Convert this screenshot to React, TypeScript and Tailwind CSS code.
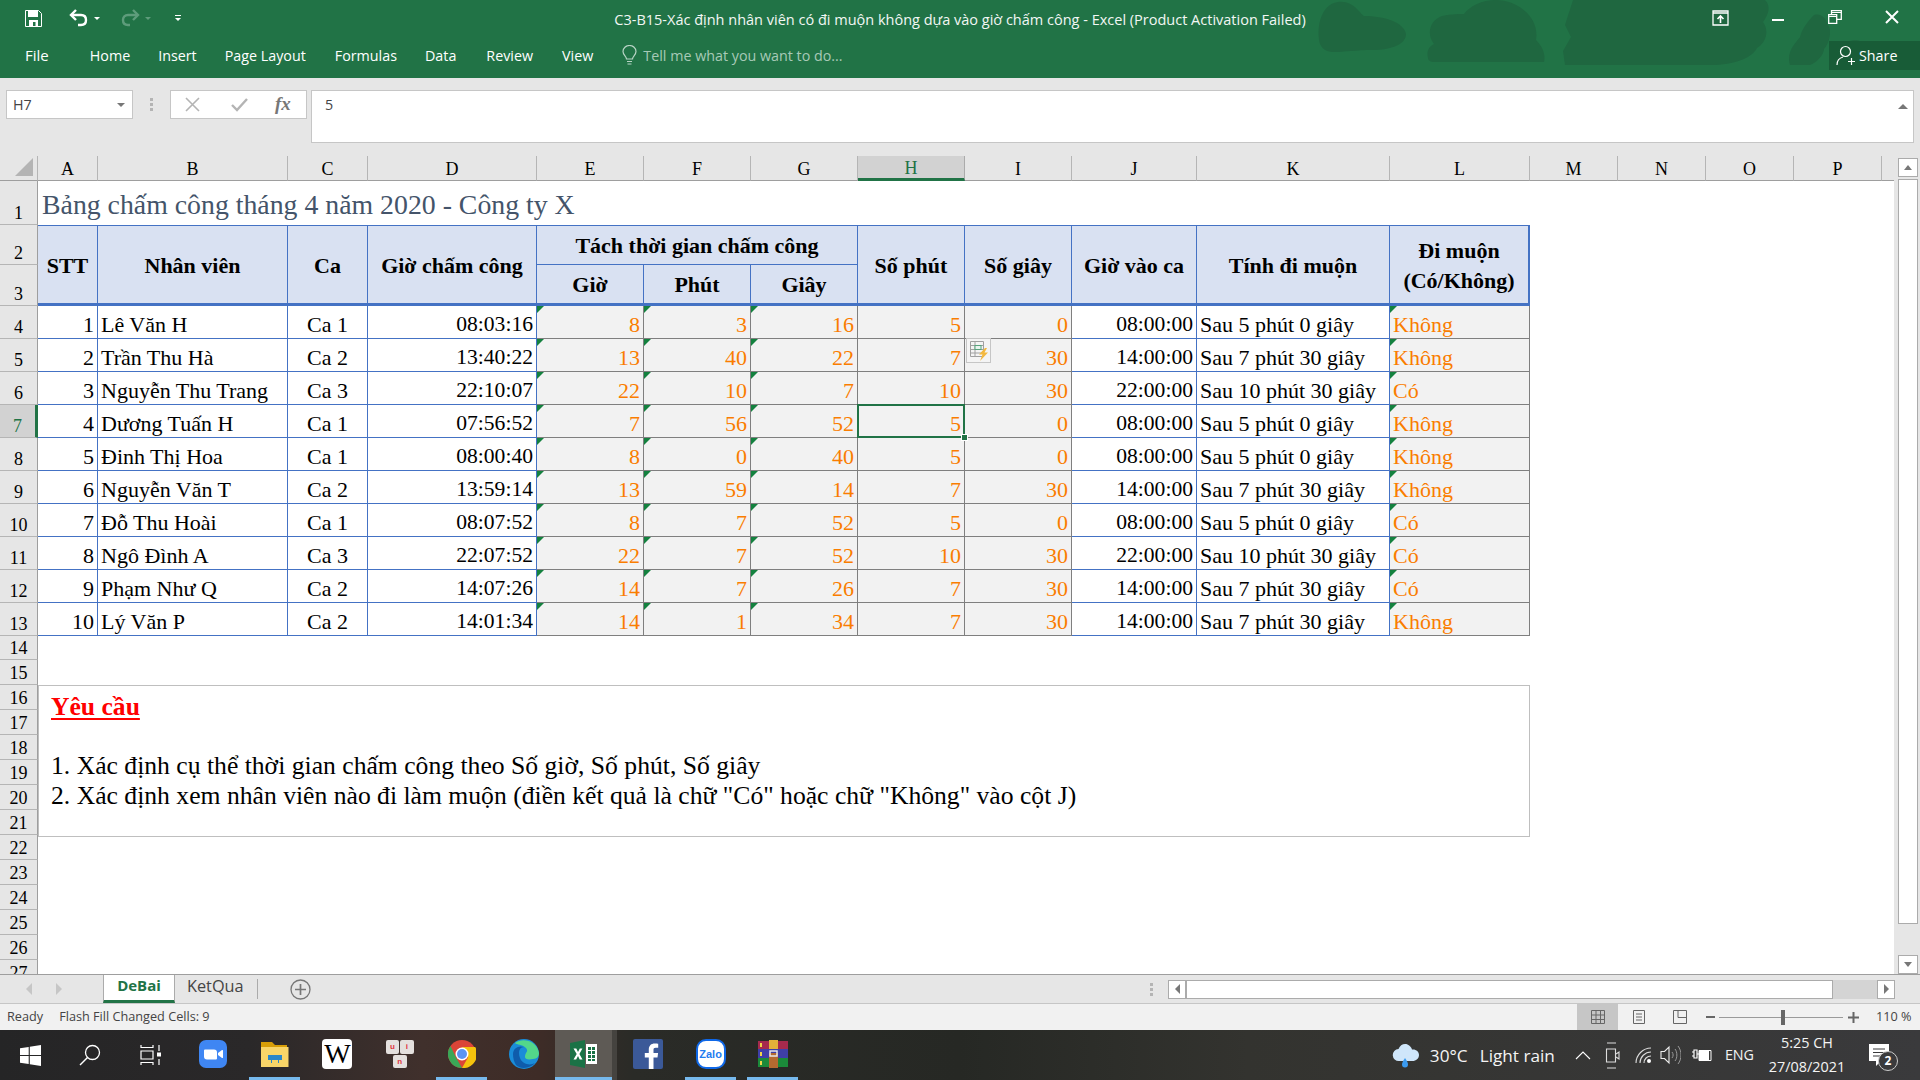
import { Fragment } from "react";

const UI = "font-['Open_Sans',sans-serif]";

const COLS = ["A", "B", "C", "D", "E", "F", "G", "H", "I", "J", "K", "L", "M", "N", "O", "P"];

const ROWS: [number, string, string, string, number, number, number, number, number, string, string, string][] = [
  [1, "Lê Văn H", "Ca 1", "08:03:16", 8, 3, 16, 5, 0, "08:00:00", "Sau 5 phút 0 giây", "Không"],
  [2, "Trần Thu Hà", "Ca 2", "13:40:22", 13, 40, 22, 7, 30, "14:00:00", "Sau 7 phút 30 giây", "Không"],
  [3, "Nguyễn Thu Trang", "Ca 3", "22:10:07", 22, 10, 7, 10, 30, "22:00:00", "Sau 10 phút 30 giây", "Có"],
  [4, "Dương Tuấn H", "Ca 1", "07:56:52", 7, 56, 52, 5, 0, "08:00:00", "Sau 5 phút 0 giây", "Không"],
  [5, "Đinh Thị Hoa", "Ca 1", "08:00:40", 8, 0, 40, 5, 0, "08:00:00", "Sau 5 phút 0 giây", "Không"],
  [6, "Nguyễn Văn T", "Ca 2", "13:59:14", 13, 59, 14, 7, 30, "14:00:00", "Sau 7 phút 30 giây", "Không"],
  [7, "Đỗ Thu Hoài", "Ca 1", "08:07:52", 8, 7, 52, 5, 0, "08:00:00", "Sau 5 phút 0 giây", "Có"],
  [8, "Ngô Đình A", "Ca 3", "22:07:52", 22, 7, 52, 10, 30, "22:00:00", "Sau 10 phút 30 giây", "Có"],
  [9, "Phạm Như Q", "Ca 2", "14:07:26", 14, 7, 26, 7, 30, "14:00:00", "Sau 7 phút 30 giây", "Có"],
  [10, "Lý Văn P", "Ca 2", "14:01:34", 14, 1, 34, 7, 30, "14:00:00", "Sau 7 phút 30 giây", "Không"],
];

function RowHead({ n, active, clipped }: { n: number; active?: boolean; clipped?: boolean }) {
  return (
    <div
      className={`col-start-1 flex justify-center overflow-hidden text-[18px] ${
        clipped ? "items-start leading-[26px]" : "items-end border-b border-b-[#b5b5b5] leading-[22px]"
      } ${
        active
          ? "bg-[#d2d2d2] text-[#217346] border-r-[3px] border-r-[#217346]"
          : "bg-[#e6e6e6] text-black border-r border-r-[#9e9e9e]"
      }`}
    >
      {n}
    </div>
  );
}

function Tri() {
  return <span className="absolute left-0 top-0 border-t-[7px] border-r-[7px] border-t-[#14813f] border-r-transparent" />;
}

function Head({ children, className = "" }: { children: React.ReactNode; className?: string }) {
  return (
    <div className={`flex items-center justify-center border-r border-b border-[#4472c4] bg-[#d9e1f2] pt-[2px] text-center font-bold leading-[30px] ${className}`}>
      {children}
    </div>
  );
}

const blue = "border-r border-b border-[#4472c4] bg-white text-black";
const gray = "border-r border-b border-r-[#7f7f7f] border-b-[#7f7f7f] bg-[#f2f2f2] text-[#fa7d00]";
const cell = "relative flex items-end whitespace-nowrap leading-[27px]";

function Sheet() {
  return (
    <div className="grid w-[1894px] grid-cols-[38px_60px_190px_80px_169px_107px_107px_107px_107px_107px_125px_193px_140px_88px_88px_88px_88px_12px] grid-rows-[25px_44px_40px_41px_repeat(10,33px)_24px_repeat(12,25px)_14px] overflow-hidden bg-white font-['Liberation_Serif',serif] text-[22px] text-black">
      {/* column letters */}
      <div className="relative border-r border-b border-r-[#b5b5b5] border-b-[#9e9e9e] bg-[#e6e6e6]">
        <svg className="absolute right-[4px] bottom-[4px]" width="18" height="18" viewBox="0 0 18 18">
          <path d="M18 0v18H0z" fill="#b4b4b4" />
        </svg>
      </div>
      {COLS.map((c) => (
        <div
          key={c}
          className={`flex items-center justify-center border-r pt-[3px] text-[18px] ${
            c === "H"
              ? "bg-[#d2d2d2] border-r-[#ababab] border-b-[3px] border-b-[#217346] text-[#217346]"
              : "bg-[#e6e6e6] border-r-[#b5b5b5] border-b border-b-[#9e9e9e]"
          }`}
        >
          {c}
        </div>
      ))}
      <div className="border-b border-b-[#9e9e9e] bg-[#e6e6e6]" />

      <RowHead n={1} />
      <div className="col-span-12 flex items-end pl-[4px] pb-[1px] text-[27.8px] leading-[38px] whitespace-nowrap text-[#44546a]">
        Bảng chấm công tháng 4 năm 2020 - Công ty X
      </div>

      <RowHead n={2} />
      <Head className="row-span-2 border-t border-b-[3px]">STT</Head>
      <Head className="row-span-2 border-t border-b-[3px]">Nhân viên</Head>
      <Head className="row-span-2 border-t border-b-[3px]">Ca</Head>
      <Head className="row-span-2 border-t border-b-[3px]">Giờ chấm công</Head>
      <Head className="col-span-3 border-t">Tách thời gian chấm công</Head>
      <Head className="row-span-2 border-t border-b-[3px]">Số phút</Head>
      <Head className="row-span-2 border-t border-b-[3px]">Số giây</Head>
      <Head className="row-span-2 border-t border-b-[3px]">Giờ vào ca</Head>
      <Head className="row-span-2 border-t border-b-[3px]">Tính đi muộn</Head>
      <Head className="row-span-2 border-t border-b-[3px] border-r-2">
        <span>
          Đi muộn
          <br />
          (Có/Không)
        </span>
      </Head>

      <RowHead n={3} />
      <Head className="border-b-[3px]">Giờ</Head>
      <Head className="border-b-[3px]">Phút</Head>
      <Head className="border-b-[3px]">Giây</Head>

      {ROWS.map((r, i) => {
        const rowNo = i + 4;
        return (
          <Fragment key={rowNo}>
            <RowHead n={rowNo} active={rowNo === 7} />
            <div className={`${cell} ${blue} justify-end pr-[3px]`}>{r[0]}</div>
            <div className={`${cell} ${blue} pl-[3px]`}>{r[1]}</div>
            <div className={`${cell} ${blue} justify-center`}>{r[2]}</div>
            <div className={`${cell} ${blue} justify-end pr-[3px] text-[21.6px]`}>{r[3]}</div>
            <div className={`${cell} ${gray} justify-end pr-[3px]`}><Tri />{r[4]}</div>
            <div className={`${cell} ${gray} justify-end pr-[3px]`}><Tri />{r[5]}</div>
            <div className={`${cell} ${gray} justify-end pr-[3px]`}><Tri />{r[6]}</div>
            <div className={`${cell} ${gray} justify-end pr-[3px]`}>
              {r[7]}
              {rowNo === 7 && (
                <>
                  <span className="absolute -top-px -left-px -right-px -bottom-px z-10 border-2 border-[#217346]" />
                  <span className="absolute -right-[4px] -bottom-[4px] z-10 size-[7px] border border-white bg-[#217346]" />
                </>
              )}
            </div>
            <div className={`${cell} ${gray} justify-end pr-[3px]`}>
              {r[8]}
              {rowNo === 5 && <FlashFillTag />}
            </div>
            <div className={`${cell} ${blue} justify-end pr-[3px] text-[21.6px]`}>{r[9]}</div>
            <div className={`${cell} ${blue} pl-[3px]`}>{r[10]}</div>
            <div className={`${cell} ${gray} pl-[3px]`}><Tri />{r[11]}</div>
          </Fragment>
        );
      })}

      <RowHead n={14} />
      <RowHead n={15} />
      <RowHead n={16} />
      <div className="col-span-12 row-span-6 h-[152px] border border-[#bfbfbf] bg-white pl-[12px] text-[25.65px] text-black">
        <div className="mt-[2px] text-[25.6px] leading-[38px] font-bold text-[#ff0000] underline underline-offset-[3px]">Yêu cầu</div>
        <div className="mt-[25px] leading-[30px] whitespace-nowrap">1. Xác định cụ thể thời gian chấm công theo Số giờ, Số phút, Số giây</div>
        <div className="leading-[30px] whitespace-nowrap">2. Xác định xem nhân viên nào đi làm muộn (điền kết quả là chữ "Có" hoặc chữ "Không" vào cột J)</div>
      </div>
      {[17, 18, 19, 20, 21, 22, 23, 24, 25, 26].map((n) => (
        <RowHead key={n} n={n} />
      ))}
      <RowHead n={27} clipped />
    </div>
  );
}

function FlashFillTag() {
  return (
    <span className="absolute top-[-1px] left-[1px] z-10 flex size-[25px] items-center justify-center border border-[#c6c6c6] bg-[#f4f4f4]">
      <svg width="20" height="21" viewBox="0 0 20 21">
        <path d="M1.5 1.5h13v15h-13zM1.5 5.500h13M1.5 9.500h13M1.500 13h13M6 1.500v15" fill="none" stroke="#a0a0a0" />
        <rect x="6" y="5.500" width="6" height="4" fill="#e8f4ee" stroke="#57a37c" />
        <path d="M16 8l-6 6.500h3.500L11 21l8-8.500h-3.500l2.500-4.500z" fill="#f3b83e" />
      </svg>
    </span>
  );
}

function Cloud() {
  return (
    <svg className="absolute top-0 left-[1300px]" width="620" height="65" viewBox="0 0 620 65">
      <g fill="#1f6740">
        <path d="M20 44C16 30 20 4 38 2c16-2 22 12 26 14 20 0 40 6 42 18 0 10-14 16-34 16-14 0-30 2-36 2-6 0-12 0-16-8z" />
        <path d="M128 58c-2-8 2-12 6-14-8-10-4-24 8-28 10-2 18-2 22-2 6-8 18-14 32-14 20 0 44 16 40 40 6 6 10 14 8 22H134c-4 0-6-2-6-4z" />
        <path d="M265 65l-2-14 8-14-6-12 8-25h192c6 6 4 14-2 22 6 8 4 20-6 26-4 8-18 16-42 17z" />
        <path d="M490 65c-4-14 6-22 10-28 2-8 8-16 14-22 8-2 12 4 14 10 4 4 2 18-4 24 0 6-8 14-14 16z" />
        <path d="M540 65c0-12 4-22 10-24 10-4 18 4 22 14l6 10z" />
      </g>
    </svg>
  );
}

const TABS: [string, string][] = [
  ["Home", "ml-[41px]"],
  ["Insert", "ml-[28px]"],
  ["Page Layout", "ml-[28px]"],
  ["Formulas", "ml-[29px]"],
  ["Data", "ml-[28px]"],
  ["Review", "ml-[30px]"],
  ["View", "ml-[29px]"],
];

function TitleBar() {
  return (
    <div className="relative h-[78px] shrink-0 bg-[#217346] text-white">
      <Cloud />
      <div className="relative flex h-[41px] items-start">
        <div className="flex flex-1 items-center pt-[9px]">
          <svg className="ml-[25px]" width="17" height="17" viewBox="0 0 17 17">
            <path d="M.5.5h13l3 3v13H.5z" fill="none" stroke="#fff" />
            <path d="M3 1h10v6H3zM4 10h9v6H4z" fill="#fff" />
            <path d="M8 12h2.500v4H8z" fill="#217346" />
          </svg>
          <svg className="ml-[27px]" width="20" height="18" viewBox="0 0 20 18">
            <path d="M7 1L2 6l5 5" fill="none" stroke="#fff" strokeWidth="2.400" />
            <path d="M3 6h9c3 0 5 2 5 5s-2 5-5 5H9" fill="none" stroke="#fff" strokeWidth="2.400" />
          </svg>
          <span className="ml-[5px] border-x-[3px] border-t-[3px] border-x-transparent border-t-white" />
          <svg className="ml-[20px]" width="20" height="18" viewBox="0 0 20 18">
            <path d="M13 1l5 5-5 5" fill="none" stroke="#5e9c7b" strokeWidth="2.400" />
            <path d="M17 6H8c-3 0-5 2-5 5s2 5 5 5h2" fill="none" stroke="#5e9c7b" strokeWidth="2.400" />
          </svg>
          <span className="ml-[5px] border-x-[3px] border-t-[3px] border-x-transparent border-t-[#5e9c7b]" />
          <span className="ml-[24px] flex flex-col items-center gap-[2px]">
            <span className="h-px w-[6px] bg-white" />
            <span className="border-x-[3px] border-t-[3px] border-x-transparent border-t-white" />
          </span>
        </div>
        <div className={`${UI} pt-[10px] text-[14.5px] leading-[20px] whitespace-nowrap text-[#f2f7f4]`}>
          C3-B15-Xác định nhân viên có đi muộn không dựa vào giờ chấm công - Excel (Product Activation Failed)
        </div>
        <div className="flex flex-1 justify-end pt-[10px]">
          <div className="flex w-[57px] justify-center">
            <svg width="17" height="17" viewBox="0 0 17 17">
              <path d="M1 1h15v14H1zM1 3h15" fill="none" stroke="#fff" strokeWidth="1.300" />
              <path d="M8.500 13V6M5.500 9l3-3 3 3" fill="none" stroke="#fff" strokeWidth="1.600" />
            </svg>
          </div>
          <div className="flex w-[57px] items-center justify-center"><span className="mt-[2px] h-[2px] w-[12px] bg-white" /></div>
          <div className="flex w-[57px] justify-center">
            <svg width="14" height="14" viewBox="0 0 14 14">
              <path d="M.7 4.700h8v8.600h-8zM3.500 4.500V.7h9.800v8.600H9" fill="none" stroke="#fff" strokeWidth="1.300" />
              <path d="M.7 6.500h8M3.500 2.500h10" stroke="#fff" strokeWidth="1" />
            </svg>
          </div>
          <div className="flex w-[57px] justify-center">
            <svg width="14" height="14" viewBox="0 0 14 14">
              <path d="M1 1l12 12M13 1L1 13" stroke="#fff" strokeWidth="2" />
            </svg>
          </div>
        </div>
      </div>
      <div className={`${UI} relative flex h-[29px] items-center pl-[25px] text-[14.3px]`}>
        <span className="text-[15px]">File</span>
        {TABS.map(([t, ml]) => (
          <span key={t} className={ml}>{t}</span>
        ))}
        <svg className="ml-[29px]" width="15" height="21" viewBox="0 0 15 21">
          <path d="M4.500 14c0-2.500-3.500-4-3.500-7.500a6.500 6 0 0 1 13 0C14 10 10.500 11.500 10.500 14zM5 16.500h5M5.500 19h4" fill="none" stroke="#b8d4c5" strokeWidth="1.200" />
        </svg>
        <span className="ml-[6px] text-[#a7cab7]">Tell me what you want to do...</span>
        <div className="ml-auto flex h-full w-[91px] items-center gap-[3px] bg-[#185c37] pl-[7px]">
          <svg width="20" height="21" viewBox="0 0 20 21">
            <circle cx="9.500" cy="6.500" r="5" fill="none" stroke="#fff" strokeWidth="1.200" />
            <path d="M1 20c0-4 2-7 6-8M12 16.500h7M15.500 13v7" fill="none" stroke="#fff" strokeWidth="1.200" />
          </svg>
          <span>Share</span>
        </div>
      </div>
    </div>
  );
}

function FormulaBar() {
  return (
    <div className={`${UI} flex h-[78px] shrink-0 items-start bg-[#e6e6e6] pt-[12px] pl-[6px] text-[14.3px] text-[#444]`}>
      <div className="flex h-[29px] w-[127px] items-center justify-between border border-[#c6c6c6] bg-white pr-[7px] pl-[6px]">
        <span>H7</span>
        <span className="border-x-[4px] border-t-[4px] border-x-transparent border-t-[#777]" />
      </div>
      <div className="flex h-[29px] w-[37px] flex-col items-center justify-center gap-[2px]">
        <span className="size-[3px] bg-[#b4b4b4]" />
        <span className="size-[3px] bg-[#b4b4b4]" />
        <span className="size-[3px] bg-[#b4b4b4]" />
      </div>
      <div className="flex h-[29px] w-[137px] items-center border border-[#c6c6c6] bg-white">
        <svg className="ml-[14px]" width="15" height="15" viewBox="0 0 15 15">
          <path d="M1 1l13 13M14 1L1 14" stroke="#b4b4b4" strokeWidth="1.600" />
        </svg>
        <svg className="ml-[31px]" width="17" height="15" viewBox="0 0 17 15">
          <path d="M1 8l5 5L16 2" fill="none" stroke="#b4b4b4" strokeWidth="2.400" />
        </svg>
        <span className="ml-[27px] font-['Liberation_Serif',serif] text-[19px] font-bold text-[#777] italic">fx</span>
      </div>
      <div className="relative ml-[4px] h-[53px] w-[1603px] border border-[#c6c6c6] bg-white pt-[4px] pl-[13px] leading-[20px]">
        5
        <span className="absolute top-[13px] right-[5px] border-x-[5px] border-b-[5px] border-x-transparent border-b-[#777]" />
      </div>
    </div>
  );
}

function VScroll() {
  return (
    <div className="flex h-[818px] w-[26px] flex-col items-center bg-[#e6e6e6] pt-[2px] pl-[2px]">
      <div className="flex h-[19px] w-[20px] shrink-0 items-center justify-center border border-[#ababab] bg-white">
        <span className="border-x-[4px] border-b-[5px] border-x-transparent border-b-[#777]" />
      </div>
      <div className="mt-[2px] h-[745px] w-[20px] border border-[#ababab] bg-white" />
      <div className="mt-auto flex h-[19px] w-[20px] items-center justify-center border border-[#ababab] bg-white">
        <span className="border-x-[4px] border-t-[5px] border-x-transparent border-t-[#777]" />
      </div>
    </div>
  );
}

function SheetTabs() {
  return (
    <div className={`${UI} flex h-[29px] shrink-0 items-stretch border-t border-[#9e9e9e] bg-[#e6e6e6]`}>
      <div className="flex w-[103px] items-center pl-[26px]">
        <span className="border-y-[6px] border-r-[6px] border-y-transparent border-r-[#c6c6c6]" />
        <span className="ml-[24px] border-y-[6px] border-l-[6px] border-y-transparent border-l-[#c6c6c6]" />
      </div>
      <div className="flex w-[72px] items-center justify-center border-x border-b-[3px] border-x-[#ababab] border-b-[#217346] bg-white pb-[5px] text-[15px] font-bold text-[#217346]">
        DeBai
      </div>
      <div className="flex w-[82px] items-center pb-[5px] pl-[12px] text-[16.3px] text-[#444]">
        KetQua
        <span className="mt-[5px] ml-[13px] h-[20px] w-px bg-[#ababab]" />
      </div>
      <div className="ml-[33px] flex items-center">
        <svg width="21" height="21" viewBox="0 0 21 21">
          <circle cx="10.500" cy="10.500" r="9.500" fill="none" stroke="#777" strokeWidth="1.300" />
          <path d="M10.500 5v11M5 10.500h11" stroke="#777" strokeWidth="1.700" />
        </svg>
      </div>
      <div className="ml-[839px] flex flex-col justify-center gap-[2px]">
        <span className="size-[3px] bg-[#b4b4b4]" />
        <span className="size-[3px] bg-[#b4b4b4]" />
        <span className="size-[3px] bg-[#b4b4b4]" />
      </div>
      <div className="ml-[15px] flex h-[19px] w-[727px] self-center bg-[#d4d4d4]">
        <div className="flex w-[18px] items-center justify-center border border-[#ababab] bg-white">
          <span className="border-y-[5px] border-r-[5px] border-y-transparent border-r-[#777]" />
        </div>
        <div className="w-[647px] border border-[#ababab] bg-white" />
        <div className="ml-auto flex w-[18px] items-center justify-center border border-[#ababab] bg-white">
          <span className="border-y-[5px] border-l-[5px] border-y-transparent border-l-[#777]" />
        </div>
      </div>
    </div>
  );
}

function StatusBar() {
  return (
    <div className={`${UI} flex h-[27px] shrink-0 items-center border-t border-[#c6c6c6] bg-[#f1f1f1] pl-[7px] text-[12.7px] text-[#444]`}>
      <span>Ready</span>
      <span className="ml-[16px]">Flash Fill Changed Cells: 9</span>
      <div className="ml-auto flex h-full items-center">
        <div className="flex h-full w-[41px] items-center justify-center bg-[#c6c6c6]">
          <svg width="14" height="14" viewBox="0 0 14 14">
            <path d="M.5.5h13v13H.5zM.5 5h13M.5 9.500h13M5 .5v13M9.500.5v13" fill="none" stroke="#666" />
          </svg>
        </div>
        <div className="flex w-[41px] justify-center">
          <svg width="14" height="14" viewBox="0 0 14 14">
            <path d="M1.500.5h11v13h-11zM4 4h6M4 7h6M4 10h6" fill="none" stroke="#666" />
          </svg>
        </div>
        <div className="flex w-[41px] justify-center">
          <svg width="14" height="14" viewBox="0 0 14 14">
            <path d="M.5.5h13v13H.5zM5 .5v7h8.500" fill="none" stroke="#666" />
          </svg>
        </div>
        <span className="ml-[6px] h-[2px] w-[9px] bg-[#666]" />
        <div className="relative ml-[4px] h-px w-[124px] bg-[#9a9a9a]">
          <span className="absolute top-[-7px] left-[62px] h-[15px] w-[4px] bg-[#666]" />
        </div>
        <svg className="ml-[5px]" width="11" height="11" viewBox="0 0 11 11">
          <path d="M5.500 0v11M0 5.500h11" stroke="#666" strokeWidth="2" />
        </svg>
        <span className="mr-[8px] ml-[17px] w-[36px] whitespace-nowrap">110 %</span>
      </div>
    </div>
  );
}

function TaskBtn({ children, open, active }: { children: React.ReactNode; open?: boolean; active?: boolean }) {
  return (
    <div
      className={`relative flex h-full w-[62.2px] shrink-0 items-center justify-center pb-[2px] ${
        active ? "border-r-[5px] border-r-[#45433f] bg-[#5e5a55]" : ""
      }`}
    >
      {children}
      {open && <span className={`absolute bottom-0 h-[3px] bg-[#76b9ed] ${active ? "inset-x-0" : "left-[5px] w-[51px]"}`} />}
    </div>
  );
}

function Taskbar() {
  return (
    <div className={`${UI} flex h-[50px] shrink-0 items-stretch bg-[linear-gradient(90deg,#252526_0%,#2a2829_13%,#40302c_22%,#3e2c27_28%,#2a2b27_33%,#262824_50%,#33332f_65%,#3a3a3c_100%)] text-white`}>
      <div className="flex w-[60px] items-center justify-center">
        <svg width="21" height="21" viewBox="0 0 21 21">
          <path d="M0 3.200l8.700-1.300v8.100H0zM9.800 1.700L21 0v10H9.800zM0 11h8.700v8.100L0 17.800zM9.800 11H21v10L9.800 19.300z" fill="#fff" />
        </svg>
      </div>
      <div className="flex w-[59px] items-center justify-center">
        <svg width="22" height="22" viewBox="0 0 22 22">
          <circle cx="13.500" cy="8.500" r="7" fill="none" stroke="#fff" strokeWidth="1.300" />
          <path d="M8.500 13.500L1 21" stroke="#fff" strokeWidth="1.400" />
        </svg>
      </div>
      <div className="mr-[1px] flex w-[62px] items-center justify-center">
        <svg width="21" height="20" viewBox="0 0 21 20">
          <path d="M1 0v2.500h12V0M1 6h12v8H1zM1 20v-2.500h12V20M19 0v6M19 14v6" fill="none" stroke="#fff" strokeWidth="1.200" />
          <rect x="17" y="7.500" width="4" height="4" fill="#fff" />
        </svg>
      </div>
      <TaskBtn>
        <svg width="28" height="28" viewBox="0 0 28 28">
          <rect width="28" height="28" rx="7" fill="#3f86f3" />
          <path d="M5 10.500a1 1 0 0 1 1-1h9a3 3 0 0 1 3 3v6a1 1 0 0 1-1 1H8a3 3 0 0 1-3-3zM19 13l4-3c.500-.300 1 0 1 .500v7c0 .500-.500.800-1 .500l-4-3z" fill="#fff" />
        </svg>
      </TaskBtn>
      <TaskBtn open>
        <svg width="28" height="25" viewBox="0 0 28 25">
          <path d="M0 0h11l3 3h12v4H0z" fill="#d89e08" />
          <path d="M0 5h27.500v20H0z" fill="#f9d568" />
          <path d="M7 13h14v5h-3v3h-8v-3H7z" fill="#2a86c9" />
          <path d="M11 18h6v4h-6z" fill="#f9d568" />
        </svg>
      </TaskBtn>
      <TaskBtn>
        <div className="flex h-[30px] w-[30px] items-center justify-center rounded-[4px] bg-white font-['Liberation_Serif',serif] text-[28px] leading-none text-black">
          W
        </div>
      </TaskBtn>
      <TaskBtn>
        <div className="grid h-[28px] w-[28px] grid-cols-2 gap-[1px] font-['Liberation_Sans',sans-serif] text-[8px] leading-[13px] font-bold text-[#e0343f]">
          <span className="rounded-[2px] bg-[#e4e0de] text-center">u</span>
          <span className="rounded-[2px] bg-[#e4e0de] text-center">i</span>
          <span className="col-span-2 mx-auto w-[14px] rounded-[2px] bg-[#e4e0de] text-center">n</span>
        </div>
      </TaskBtn>
      <TaskBtn open>
        <svg width="28" height="28" viewBox="0 0 28 28">
          <circle cx="14" cy="14" r="14" fill="#db4437" />
          <path d="M14 7h13.200A14 14 0 0 1 14 28l6-10.500z" fill="#f4c20d" />
          <path d="M14 28A14 14 0 0 1 2.500 6L8 17.500z" fill="#3aa757" />
          <circle cx="14" cy="14" r="6.500" fill="#fff" />
          <circle cx="14" cy="14" r="5" fill="#5a94f1" />
        </svg>
      </TaskBtn>
      <TaskBtn>
        <svg width="30" height="30" viewBox="0 0 30 30">
          <circle cx="15" cy="15" r="15" fill="#1a8cd8" />
          <path d="M6 4C14-2 28 2 30 14c0 3-2 6-6 6-5 1-8 0-8-2 0-5 4-5 1-9C13 5 8 6 6 4z" fill="#53d78a" />
          <path d="M4 15c0-6 6-9 11-7-5 0-6 6-4 11 2 6 10 8 15 5-4 5-14 7-19 2-2-3-3-7-3-11z" fill="#0f5cab" />
        </svg>
      </TaskBtn>
      <TaskBtn open active>
        <svg width="28" height="28" viewBox="0 0 28 28">
          <path d="M15 0L0 3v22l15 3z" fill="#1a7246" />
          <path d="M16 4h11v20H16z" fill="#fff" />
          <path d="M18 7h3v3h-3zM22 7h3v3h-3zM18 11h3v3h-3zM22 11h3v3h-3zM18 15h3v3h-3zM22 15h3v3h-3zM18 19h3v2h-3zM22 19h3v2h-3z" fill="#1a7246" />
          <path d="M3.500 8.500h2.800l1.700 3.500 1.800-3.500h2.600L9.400 14l3.100 5.500H9.700L8 16l-1.800 3.500H3.500L6.700 14z" fill="#fff" />
        </svg>
      </TaskBtn>
      <TaskBtn>
        <svg width="30" height="30" viewBox="0 0 30 30">
          <rect width="30" height="30" rx="2" fill="#3b5998" />
          <path d="M20.500 30V18.500h4l.6-4.500h-4.600v-3c0-1.300.4-2.200 2.300-2.200h2.400V4.700c-.400 0-1.900-.200-3.500-.200-3.500 0-5.900 2.100-5.900 6V14h-4v4.500h4V30z" fill="#fff" />
        </svg>
      </TaskBtn>
      <TaskBtn open>
        <div className="flex h-[30px] w-[30px] items-center justify-center rounded-[10px] border-2 border-[#0f68e8] bg-white font-['Liberation_Sans',sans-serif] text-[11px] font-bold text-[#1f7cf0]">
          Zalo
        </div>
      </TaskBtn>
      <TaskBtn open>
        <svg width="30" height="28" viewBox="0 0 30 28">
          <path d="M0 1h30v8H0z" fill="#a62a4d" />
          <path d="M0 9h30v9H0z" fill="#3f3fa8" />
          <path d="M0 18h30v9H0z" fill="#1b8a3a" />
          <path d="M11 0h9v9h-9z" fill="#e3b13a" />
          <path d="M11 13h9v15h-9z" fill="#b56a30" />
          <path d="M12 11h7v5h-7z" fill="none" stroke="#e8e8e8" strokeWidth="1.500" />
          <path d="M3 3v4M3 12v4M3 21v4" stroke="#f2d54a" strokeWidth="2" />
        </svg>
      </TaskBtn>

      <div className="ml-auto flex h-full items-center">
        <svg width="27" height="25" viewBox="0 0 27 25">
          <path d="M7 18a6 6 0 0 1-.500-12C8 2 12 0 15.500 1.500c2.500 1 4 3 4.500 5 4-.500 7 2 7 5.500s-3 6-6.500 6z" fill="#cfe6fa" />
          <path d="M13 15c2 3 3 5 3 6.500a3 3 0 0 1-6 0c0-1.500 1-3.500 3-6.500z" fill="#3b9bf0" />
        </svg>
        <span className="ml-[11px] pt-[2px] text-[17.2px] text-[#f4f4f4]">30°C</span>
        <span className="ml-[12px] pt-[2px] text-[17.2px] text-[#f4f4f4]">Light rain</span>
        <svg className="ml-[20px]" width="16" height="9" viewBox="0 0 16 9">
          <path d="M1 8l7-7 7 7" fill="none" stroke="#fff" strokeWidth="1.100" />
        </svg>
        <svg className="ml-[14px]" width="15" height="27" viewBox="0 0 15 27">
          <path d="M2 1h9M2 26h9M1.500 7h9v13h-9zM11 12l3-2v7l-3-2" fill="none" stroke="#ddd" strokeWidth="1.100" />
        </svg>
        <svg className="ml-[15px]" width="17" height="17" viewBox="0 0 17 17">
          <path d="M1 16C1 8 8 1 16 1M5 16c0-6 5-11 11-11M9 16c0-4 3-7 7-7" fill="none" stroke="#ddd" strokeWidth="1.100" />
          <circle cx="14" cy="14" r="2" fill="#fff" />
        </svg>
        <svg className="ml-[8px]" width="21" height="22" viewBox="0 0 21 22">
          <path d="M1 7.500h3.500L9 3v16l-4.500-4.500H1z" fill="none" stroke="#eee" strokeWidth="1.100" />
          <path d="M12 8c1.500 2 1.500 4 0 6M15 5c2.500 3 2.500 9 0 12M18 2c4 5 4 13 0 18" fill="none" stroke="#999" strokeWidth="1" />
        </svg>
        <svg className="ml-[11px]" width="20" height="15" viewBox="0 0 20 15">
          <path d="M0 4h2M0 8h2M2 2h3v8H2zM5 6h2" fill="none" stroke="#fff" strokeWidth="1.200" />
          <path d="M7 2.500h12v10H7z" fill="none" stroke="#fff" />
          <rect x="7" y="3" width="10" height="9" fill="#fff" />
        </svg>
        <span className="ml-[13px] text-[14.3px] text-[#f4f4f4]">ENG</span>
        <div className="ml-[13px] flex w-[80px] flex-col items-center gap-[4px] text-[14.4px] leading-[20px] whitespace-nowrap text-[#f4f4f4]">
          <span>5:25 CH</span>
          <span>27/08/2021</span>
        </div>
        <div className="relative mr-[31px] ml-[22px]">
          <svg width="20" height="22" viewBox="0 0 20 22">
            <path d="M0 0h20v17h-8l-5 5v-5H0z" fill="#fff" />
            <path d="M4 5h12M4 8.500h12M4 12h12" stroke="#3a3a3c" strokeWidth="1.200" />
          </svg>
          <span className="absolute top-[7px] left-[9px] flex size-[20px] items-center justify-center rounded-full border border-[#ccc] bg-[#3a3a3c] text-[12px] font-bold">
            2
          </span>
        </div>
      </div>
    </div>
  );
}

export default function App() {
  return (
    <div className="flex h-[1080px] w-[1920px] flex-col overflow-hidden bg-[#e6e6e6]">
      <TitleBar />
      <FormulaBar />
      <div className="flex h-[818px] shrink-0">
        <Sheet />
        <VScroll />
      </div>
      <SheetTabs />
      <StatusBar />
      <Taskbar />
    </div>
  );
}
